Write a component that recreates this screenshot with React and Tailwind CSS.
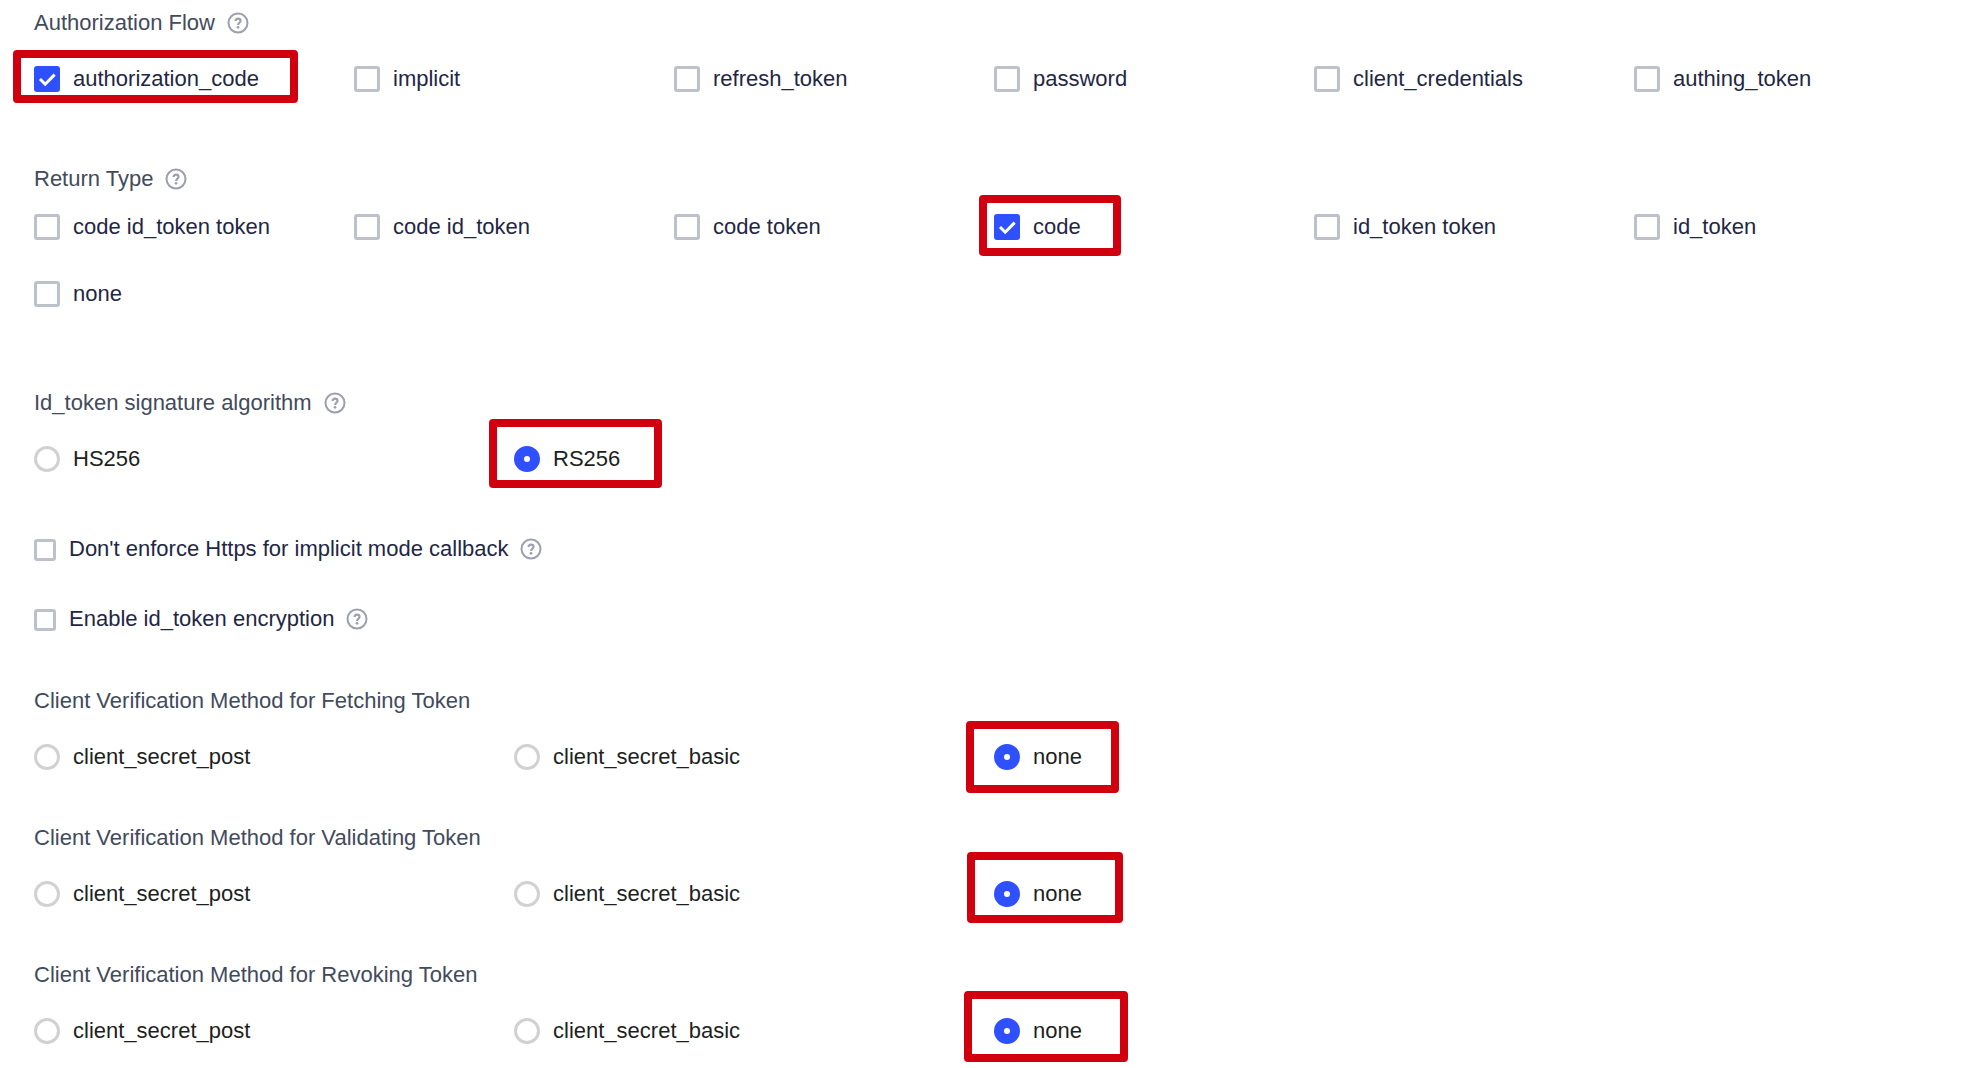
import React from "react";

function HelpButton({ label }) {
  return (
    <button type="button" aria-label={`About ${label}`} className="ml-3 shrink-0 text-[#9b9fae]">
      <svg viewBox="0 0 22 22" className="size-[22px]" fill="none" stroke="currentColor" strokeWidth="2.2">
        <circle cx="11" cy="11" r="9.5" strokeWidth="2" />
        <path d="M8.6 9C8.6 7.4 9.6 6.7 11 6.7s2.5 .9 2.5 2.2c0 1.8-2.4 1.9-2.4 4" />
        <circle cx="11" cy="15.3" r="1.4" fill="currentColor" stroke="none" />
      </svg>
    </button>
  );
}

function Heading({ children, help }) {
  return (
    <legend className="flex items-center text-[#424a5c]">
      {children}
      {help && <HelpButton label={children} />}
    </legend>
  );
}

function CheckBox({ small, checked }) {
  return (
    <span className={small ? "relative mt-0.5 size-[22px] shrink-0" : "relative size-[26px] shrink-0"}>
      <input
        type="checkbox"
        defaultChecked={checked}
        className="peer block size-full appearance-none rounded-[3px] border-[3px] border-[#bdc1cb] bg-white checked:border-[#2e50ff] checked:bg-[#2e50ff]"
      />
      <svg
        viewBox="0 0 26 26"
        className="pointer-events-none absolute inset-0 hidden size-full peer-checked:block"
        fill="none"
        stroke="white"
        strokeWidth="3"
      >
        <path d="M6 13l5.2 5.2L20.6 8.6" />
      </svg>
    </span>
  );
}

function Check({ label, checked, frame }) {
  return (
    <div className="relative">
      <label className="flex w-fit items-center gap-[13px] text-[#1f2745]">
        <CheckBox checked={checked} />
        {label}
      </label>
      {frame && <Frame className={frame} />}
    </div>
  );
}

function Radio({ label, name, checked, frame }) {
  return (
    <div className="relative">
      <label className="flex w-fit items-center gap-[13px] text-[#1d1f21]">
        <input
          type="radio"
          name={name}
          defaultChecked={checked}
          className="size-[26px] shrink-0 appearance-none rounded-full border-[3px] border-[#d1d1d1] bg-white checked:border-[10px] checked:border-[#2e50ff]"
        />
        {label}
      </label>
      {frame && <Frame className={frame} />}
    </div>
  );
}

function Frame({ className }) {
  return (
    <span
      aria-hidden="true"
      className={`pointer-events-none absolute rounded border-8 border-[#d0000f] ${className}`}
    />
  );
}

function Toggle({ label, className }) {
  return (
    <div className={`flex items-center ${className}`}>
      <label className="flex w-fit items-center gap-[13px] text-[#1f2745]">
        <CheckBox small />
        {label}
      </label>
      <HelpButton label={label} />
    </div>
  );
}

const flows = [
  { label: "authorization_code", checked: true, frame: "-left-[21px] -top-[13px] h-[53px] w-[285px]" },
  { label: "implicit" },
  { label: "refresh_token" },
  { label: "password" },
  { label: "client_credentials" },
  { label: "authing_token" },
];

const returnTypes = [
  { label: "code id_token token" },
  { label: "code id_token" },
  { label: "code token" },
  { label: "code", checked: true, frame: "-left-[15px] -top-4 h-[61px] w-[142px]" },
  { label: "id_token token" },
  { label: "id_token" },
  { label: "none" },
];

const methods = [
  { action: "Fetching", frame: "-left-7 -top-5 h-[72px] w-[153px]" },
  { action: "Validating", frame: "-left-[27px] -top-[26px] h-[71px] w-[156px]" },
  { action: "Revoking", frame: "-left-[30px] -top-6 h-[71px] w-[164px]" },
];

export default function App() {
  return (
    <form className="min-h-screen bg-white pb-5 pl-[34px] pr-5 pt-[7px] font-['Liberation_Sans',Arial,sans-serif] text-[22px] leading-8">
      <fieldset>
        <Heading help>Authorization Flow</Heading>
        <div className="mt-6 grid grid-cols-6">
          {flows.map((item) => (
            <Check key={item.label} {...item} />
          ))}
        </div>
      </fieldset>

      <fieldset className="mt-[68px]">
        <Heading help>Return Type</Heading>
        <div className="mt-4 grid grid-cols-6 gap-y-[35px]">
          {returnTypes.map((item) => (
            <Check key={item.label} {...item} />
          ))}
        </div>
      </fieldset>

      <fieldset className="mt-[77px]">
        <Heading help>Id_token signature algorithm</Heading>
        <div className="mt-6 grid grid-cols-4">
          <Radio name="algorithm" label="HS256" />
          <Radio name="algorithm" label="RS256" checked frame="-left-[25px] -top-6 h-[69px] w-[173px]" />
        </div>
      </fieldset>

      <Toggle className="mt-[58px]" label="Don't enforce Https for implicit mode callback" />
      <Toggle className="mt-[38px]" label="Enable id_token encryption" />

      <div className="mt-[50px] flex flex-col gap-[49px]">
        {methods.map(({ action, frame }) => (
          <fieldset key={action}>
            <Heading>{`Client Verification Method for ${action} Token`}</Heading>
            <div className="mt-6 grid grid-cols-4">
              <Radio name={action} label="client_secret_post" />
              <Radio name={action} label="client_secret_basic" />
              <Radio name={action} label="none" checked frame={frame} />
            </div>
          </fieldset>
        ))}
      </div>
    </form>
  );
}
